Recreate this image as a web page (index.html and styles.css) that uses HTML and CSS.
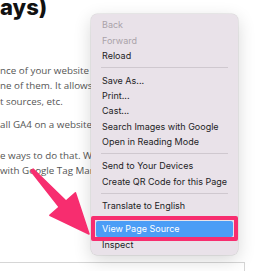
FILE: index.html
```html
<!DOCTYPE html>
<html lang="en">

<head>
    <meta charset="UTF-8">
    <meta name="viewport" content="width=device-width, initial-scale=1.0">
    <title>Install GA4</title>
    <link rel="stylesheet" href="styles.css">
</head>

<body>
    <main class="article">
        <h1 class="title">ays)</h1>
        <p class="para">
            <span class="line">nce of your website</span>
            <span class="line">ne of them. It allows</span>
            <span class="line">t sources, etc.</span>
        </p>
        <p class="para">
            <span class="line">all GA4 on a website</span>
        </p>
        <p class="para para-gap">
            <span class="line">e ways to do that. W</span>
            <span class="line">with Google Tag Mar</span>
        </p>
        <div class="code-box"></div>
    </main>

    <div class="menu">
        <div class="menu-item disabled">Back</div>
        <div class="menu-item disabled">Forward</div>
        <div class="menu-item">Reload</div>
        <div class="menu-sep"></div>
        <div class="menu-item">Save As...</div>
        <div class="menu-item">Print...</div>
        <div class="menu-item">Cast...</div>
        <div class="menu-item">Search Images with Google</div>
        <div class="menu-item">Open in Reading Mode</div>
        <div class="menu-sep"></div>
        <div class="menu-item">Send to Your Devices</div>
        <div class="menu-item">Create QR Code for this Page</div>
        <div class="menu-sep"></div>
        <div class="menu-item">Translate to English</div>
        <div class="menu-item active">View Page Source</div>
        <div class="menu-item">Inspect</div>
    </div>

    <svg class="arrow" width="100" height="100" viewBox="0 150 100 100">
        <polygon points="33.1,169 66,201 75.4,192.8 89,234 49.8,215.2 59.2,207 30.9,171" fill="#f72d6f" stroke="#f72d6f" stroke-width="1.5" stroke-linejoin="round" />
    </svg>
</body>

</html>
```

FILE: styles.css
```css
body {
    margin: 0;
    background: #fff;
    position: relative;
    overflow: hidden;
    height: 271px;
}

.article {
    padding: 0;
}

.title {
    font-family: Inter, sans-serif;
    font-weight: 800;
    font-size: 22px;
    line-height: 26px;
    color: #111;
    margin: -6px 0 0 0;
}

.para {
    width: 91px;
    overflow: hidden;
    font-family: 'Open Sans', sans-serif;
    font-size: 9.8px;
    line-height: 15.3px;
    color: #555;
    margin: 43px 0 0 0;
}

.para + .para {
    margin-top: 8.5px;
}

.para.para-gap {
    margin-top: 15.2px;
}

.line {
    display: block;
    white-space: nowrap;
}

.code-box {
    margin-top: 84px;
    width: 244px;
    height: 20px;
    border-top: 1px solid #d6d6d6;
    border-right: 1px solid #d6d6d6;
}

.menu {
    position: absolute;
    left: 91px;
    top: 14px;
    width: 147px;
    padding: 3.35px 0 3px;
    box-sizing: border-box;
    background: #e9e2e9;
    border-radius: 6px;
    box-shadow: 0 0 0 0.5px rgba(0, 0, 0, 0.12), 0 5px 18px rgba(0, 0, 0, 0.16);
    font-family: Inter, sans-serif;
    font-size: 9px;
    color: #1d1d1f;
}

.menu-item {
    height: 15.3px;
    line-height: 15.3px;
    padding-left: 11px;
    white-space: nowrap;
}

.menu-item.disabled {
    color: #aaa3aa;
}

.menu-sep {
    height: 1px;
    margin: 4.2px 10px;
    background: #cfc8cf;
}

.menu-item.active {
    position: relative;
    height: 16px;
    line-height: 16px;
    margin: 7px 5px 0 5px;
    padding-left: 6px;
    background: #4b9df6;
    color: #fff;
    border-radius: 2px;
}

.menu-item.active::after {
    content: '';
    position: absolute;
    top: -5px;
    left: -5px;
    right: -5px;
    bottom: -4px;
    border: 4px solid #f72d6f;
    border-radius: 2px;
}

.arrow {
    position: absolute;
    left: 0;
    top: 150px;
}
```
